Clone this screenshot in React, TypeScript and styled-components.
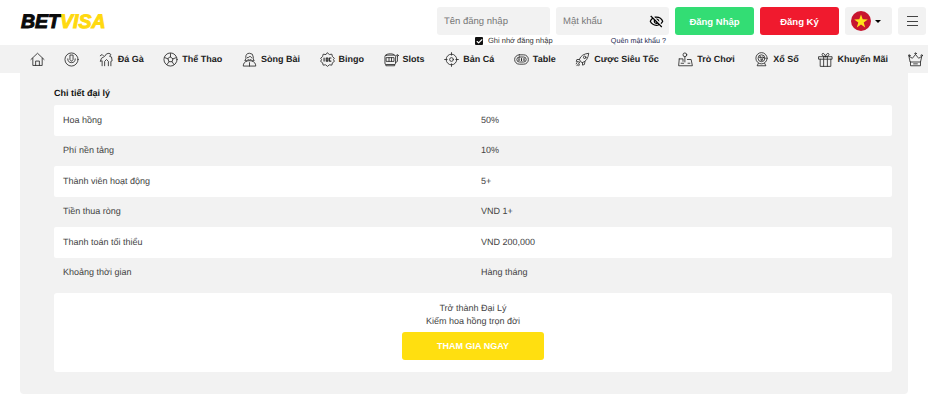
import { ReactNode } from "react";
import styled, { createGlobalStyle } from "styled-components";
import { MdOutlineVisibilityOff } from "react-icons/md";
import { Check } from "lucide-react";

const GlobalStyle = createGlobalStyle`
  html, body {
    margin: 0;
    padding: 0;
    background: #ffffff;
    font-family: "Liberation Sans", Arial, sans-serif;
    text-rendering: geometricPrecision;
  }
`;

const Glyph = ({ children }: { children: ReactNode }) => (
  <svg width="15" height="15" viewBox="0 0 24 24" fill="none" stroke="#2a2a2a" strokeWidth="1.35" strokeLinecap="round" strokeLinejoin="round">
    {children}
  </svg>
);

const HomeIcon = () => (
  <Glyph>
    <path d="M1.500 12 12 2l10.500 10M4.500 10v11.500h15V10M9 21.500v-7h6v7" />
  </Glyph>
);
const SportsBookIcon = () => (
  <Glyph>
    <circle cx="12" cy="12" r="10.500" />
    <path d="M6 11a6 6 0 1 0 12 0M9.500 5.500v6.500l2.500 3 2.500-3V5.500z" />
  </Glyph>
);
const RoosterIcon = () => (
  <Glyph>
    <path d="M5 22v-8l-3 1 2-5 5-3 3-4 4-1 3 2-2 3 3 1 1 6-2 1v7M9 22v-7l3-3 3 3v7M2 6l3-2 2 2" />
  </Glyph>
);
const BallIcon = () => (
  <Glyph>
    <circle cx="12" cy="12" r="10.500" />
    <path d="m12 8 4 3-1.500 4.500h-5L8 11zM12 8V2.500M16 11l5-2M14.500 15.500l3 4.500M9.500 15.500l-3 4.500M8 11 3 9" />
  </Glyph>
);
const DealerIcon = () => (
  <Glyph>
    <path d="M6 8a6 6 0 0 1 12 0v3l1.500 3h-15L6 11z" />
    <path d="M8.500 9c2 0 3.500-1 4.500-2.500 .8 1.500 1.500 2.500 2.500 2.500M9 11.500a3.500 3.500 0 0 0 6 0M8 14.500C4.500 15.500 2 18 2 22.500h20c0-4.500-2.500-7-6-8M12 17v5.500" />
  </Glyph>
);
const BingoIcon = () => (
  <Glyph>
    <path d="M12 1.500 15 4l4-.5.800 3.700L23 10l-1.500 2 1.500 3-3.200 2.300-.800 3.700-4-.5-3 2.500-3-2.500-4 .5-.800-3.700L1 15l1.500-3L1 10l3.200-2.800L5 3.500 9 4z" />
    <path d="M6.500 9.500v5M10 9.500h2.500v5H10zM15 9.500h2.500M15 14.500h2.500M15 9.500v5" strokeWidth="1.800" />
  </Glyph>
);
const SlotsIcon = () => (
  <Glyph>
    <rect x="1.500" y="5" width="17" height="15" rx="2" />
    <path d="M3 5c1-3 13-3 14 0M4 9h12v6H4zM8 9v6M12 9v6M3 20v2h14v-2M21.500 7v8l-3 2" />
    <circle cx="21.500" cy="5.500" r="1.300" />
  </Glyph>
);
const FishingIcon = () => (
  <Glyph>
    <circle cx="12" cy="12" r="8.500" />
    <circle cx="12" cy="12" r="3" />
    <path d="M12 1v4M12 19v4M1 12h4M19 12h4" />
  </Glyph>
);
const TableIcon = () => (
  <Glyph>
    <rect x="1" y="4.500" width="22" height="15" rx="7.500" />
    <rect x="4.500" y="8" width="15" height="8" rx="4" />
    <path d="M8 10.500v3M12 10.500v3M16 10.500v3" strokeWidth="1.800" />
  </Glyph>
);
const RocketIcon = () => (
  <Glyph>
    <path d="M9 15 7 12c2-6 7-9 15-10-1 8-4 13-10 15zM7 12H3l-1 3 5 1M12 17v4l3-1 1-5M8 16l-5 6M3 17l-1 2M7 20l-1 2" />
    <circle cx="15.500" cy="8.500" r="2" />
  </Glyph>
);
const JoystickIcon = () => (
  <Glyph>
    <circle cx="11" cy="4.500" r="3" />
    <path d="M11 7.500V16M2 11h6v4M15 12h6l2 10H1l1-11M5 18h4M16 18h3" />
  </Glyph>
);
const LotteryIcon = () => (
  <Glyph>
    <circle cx="12" cy="10" r="9" />
    <circle cx="12" cy="10" r="5.500" />
    <circle cx="10" cy="8.500" r="1.200" />
    <circle cx="14" cy="9" r="1.200" />
    <circle cx="12" cy="12.500" r="1.200" />
    <path d="M7 18l-2 4h14l-2-4" />
  </Glyph>
);
const GiftIcon = () => (
  <Glyph>
    <path d="M1.500 7.500h21v4h-21zM3.500 11.500V23h17V11.500M9 7.500V23M15 7.500V23M12 7.500C9 7.500 6 6 6.500 3.500S11 2 12 7.500c1-5.500 5-6.500 5.500-4s-2.500 4-5.500 4z" />
  </Glyph>
);
const CrownIcon = () => (
  <Glyph>
    <path d="m2 7 5 3 5-6 5 6 5-3-2 9H4zM4 16v6h16v-6M9 19h6" />
    <circle cx="12" cy="2.500" r="1.200" />
    <circle cx="2" cy="5.500" r="1.200" />
    <circle cx="22" cy="5.500" r="1.200" />
  </Glyph>
);

const navItems: { icon: ReactNode; label?: string }[] = [
  { icon: <HomeIcon /> },
  { icon: <SportsBookIcon /> },
  { icon: <RoosterIcon />, label: "Đá Gà" },
  { icon: <BallIcon />, label: "Thể Thao" },
  { icon: <DealerIcon />, label: "Sòng Bài" },
  { icon: <BingoIcon />, label: "Bingo" },
  { icon: <SlotsIcon />, label: "Slots" },
  { icon: <FishingIcon />, label: "Bản Cá" },
  { icon: <TableIcon />, label: "Table" },
  { icon: <RocketIcon />, label: "Cược Siêu Tốc" },
  { icon: <JoystickIcon />, label: "Trò Chơi" },
  { icon: <LotteryIcon />, label: "Xổ Số" },
  { icon: <GiftIcon />, label: "Khuyến Mãi" },
  { icon: <CrownIcon /> },
];

const details = [
  ["Hoa hồng", "50%"],
  ["Phí nền tảng", "10%"],
  ["Thành viên hoạt động", "5+"],
  ["Tiền thua ròng", "VND 1+"],
  ["Thanh toán tối thiểu", "VND 200,000"],
  ["Khoảng thời gian", "Hàng tháng"],
];

const App = () => {
  return (
    <Page>
      <GlobalStyle />
      <Header>
        <Logo>
          BET<LogoAccent>VISA</LogoAccent>
        </Logo>
        <HeaderRight>
          <LoginForm>
            <InputRow>
              <FieldBox>
                <FieldLabel>Tên đăng nhập</FieldLabel>
              </FieldBox>
              <FieldBox>
                <FieldLabel>Mật khẩu</FieldLabel>
                <MdOutlineVisibilityOff size={15} color="#000" />
              </FieldBox>
            </InputRow>
            <HelperRow>
              <Remember>
                <CheckBox>
                  <Check size={7} color="#fff" strokeWidth={4} />
                </CheckBox>
                Ghi nhớ đăng nhập
              </Remember>
              <Forgot>Quên mật khẩu ?</Forgot>
            </HelperRow>
          </LoginForm>
          <ActionButton $bg="#33dd74">Đăng Nhập</ActionButton>
          <ActionButton $bg="#f01a2e">Đăng Ký</ActionButton>
          <LangButton>
            <svg width="20" height="20" viewBox="0 0 20 20">
              <circle cx="10" cy="10" r="10" fill="#c8152f" />
              <path d="M10 3.500 11.700 8.300 16.800 8.400 12.700 11.500 14.200 16.400 10 13.500 5.800 16.400 7.300 11.500 3.200 8.400 8.300 8.300z" fill="#ffe21a" />
            </svg>
            <Caret />
          </LangButton>
          <MenuButton>
            <MenuLine />
            <MenuLine />
            <MenuLine />
          </MenuButton>
        </HeaderRight>
      </Header>
      <Nav>
        {navItems.map((item, i) => (
          <NavItem key={i}>
            {item.icon}
            {item.label && <NavLabel>{item.label}</NavLabel>}
          </NavItem>
        ))}
      </Nav>
      <Panel>
        <SectionTitle>Chi tiết đại lý</SectionTitle>
        <DetailList>
          {details.map(([name, value]) => (
            <DetailRow key={name}>
              <DetailCell>{name}</DetailCell>
              <DetailCell>{value}</DetailCell>
            </DetailRow>
          ))}
        </DetailList>
        <JoinCard>
          <JoinText>Trở thành Đại Lý</JoinText>
          <JoinText>Kiếm hoa hồng trọn đời</JoinText>
          <JoinButton>THAM GIA NGAY</JoinButton>
        </JoinCard>
      </Panel>
    </Page>
  );
};

export default App;

const Page = styled.div`
  width: 928px;
  height: 400px;
  overflow: hidden;
  background: #ffffff;
`;

const Header = styled.header`
  height: 45px;
  box-sizing: border-box;
  padding: 7px 2px 0 21px;
  display: flex;
  justify-content: space-between;
  align-items: flex-start;
`;

const Logo = styled.div`
  margin-top: 6px;
  font-size: 19.500px;
  line-height: 18px;
  font-weight: 700;
  font-style: italic;
  color: #0a0a0a;
  -webkit-text-stroke: 1px #0a0a0a;
`;

const LogoAccent = styled.span`
  color: #ffd90f;
  -webkit-text-stroke: 1px #ffd90f;
`;

const HeaderRight = styled.div`
  display: flex;
  gap: 6px;
  align-items: flex-start;
`;

const LoginForm = styled.div`
  display: flex;
  flex-direction: column;
  gap: 2px;
  width: 232px;
`;

const InputRow = styled.div`
  display: flex;
  gap: 6px;
`;

const FieldBox = styled.div`
  flex: 1;
  height: 28px;
  box-sizing: border-box;
  padding: 0 5px 0 7px;
  border-radius: 3px;
  background: #f2f2f2;
  display: flex;
  align-items: center;
  justify-content: space-between;
`;

const FieldLabel = styled.span`
  font-size: 9.500px;
  color: #777777;
`;

const HelperRow = styled.div`
  height: 8px;
  display: flex;
  font-size: 7.500px;
  line-height: 8px;
  color: #333333;
`;

const Remember = styled.div`
  display: flex;
  align-items: center;
  gap: 5px;
  margin-left: 38px;
`;

const CheckBox = styled.span`
  width: 8px;
  height: 8px;
  border-radius: 1px;
  background: #111111;
  display: flex;
  align-items: center;
  justify-content: center;
`;

const Forgot = styled.div`
  margin-left: auto;
  margin-right: 3px;
  font-size: 7.200px;
  color: #1c2a50;
`;

const ActionButton = styled.button<{ $bg: string }>`
  width: 79px;
  height: 28px;
  padding: 0;
  border: 0;
  border-radius: 3px;
  background: ${(p) => p.$bg};
  color: #ffffff;
  font-family: inherit;
  font-size: 9.500px;
  font-weight: 700;
`;

const LangButton = styled.div`
  width: 47px;
  height: 28px;
  box-sizing: border-box;
  padding-left: 6px;
  border-radius: 3px;
  background: #f2f2f2;
  display: flex;
  align-items: center;
  gap: 4px;
`;

const Caret = styled.span`
  width: 0;
  height: 0;
  border-left: 3px solid transparent;
  border-right: 3px solid transparent;
  border-top: 3px solid #000000;
`;

const MenuButton = styled.div`
  width: 28px;
  height: 28px;
  border-radius: 3px;
  background: #f2f2f2;
  display: flex;
  flex-direction: column;
  align-items: center;
  justify-content: center;
  gap: 3.500px;
`;

const MenuLine = styled.span`
  width: 11px;
  height: 1px;
  background: #444444;
`;

const Nav = styled.nav`
  height: 28px;
  box-sizing: border-box;
  padding: 0 0 0 29.500px;
  background: #f2f2f2;
  display: flex;
  align-items: center;
  gap: 19.600px;
  white-space: nowrap;
`;

const NavItem = styled.div`
  display: flex;
  align-items: center;
  gap: 4px;
`;

const NavLabel = styled.span`
  font-size: 9px;
  font-weight: 700;
  color: #222222;
`;

const Panel = styled.main`
  width: 888px;
  height: 321px;
  box-sizing: border-box;
  margin-left: 20px;
  padding: 16px 16px 0 34px;
  border-radius: 0 0 4px 4px;
  background: #f2f2f2;
`;

const SectionTitle = styled.h3`
  margin: 0 0 8px;
  font-size: 9px;
  line-height: 8px;
  font-weight: 700;
  color: #111111;
`;

const DetailList = styled.div`
  display: flex;
  flex-direction: column;
`;

const DetailRow = styled.div`
  height: 30.500px;
  box-sizing: border-box;
  padding: 0 0 1px 9px;
  display: grid;
  grid-template-columns: 418px 1fr;
  align-items: center;
  border-radius: 2px;
  color: #444444;
  font-size: 9px;

  &:nth-child(odd) {
    background: #ffffff;
  }
`;

const DetailCell = styled.span``;

const JoinCard = styled.section`
  margin-top: 5px;
  height: 79px;
  box-sizing: border-box;
  padding-top: 9px;
  border-radius: 3px;
  background: #ffffff;
  display: flex;
  flex-direction: column;
  align-items: center;
`;

const JoinText = styled.p`
  margin: 0;
  font-size: 9px;
  line-height: 13px;
  color: #444444;
`;

const JoinButton = styled.button`
  margin-top: 4px;
  width: 142px;
  height: 28px;
  padding: 0;
  border: 0;
  border-radius: 3px;
  background: #ffdf10;
  color: #ffffff;
  font-family: inherit;
  font-size: 9px;
  font-weight: 700;
`;
